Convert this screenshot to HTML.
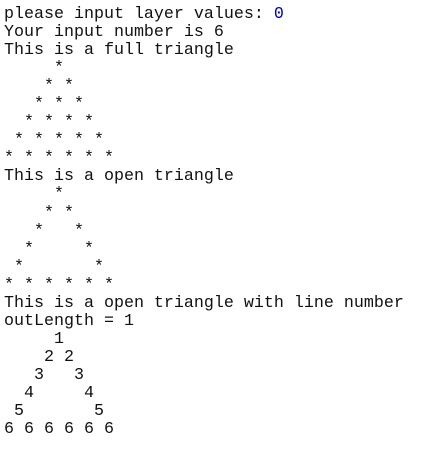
<!DOCTYPE html>
<html><head><meta charset="utf-8"><style>
html,body{margin:0;padding:0;background:#fff;width:445px;height:464px;overflow:hidden}
pre{margin:0;padding:6px 0 0 4px;font-family:"Liberation Mono","Courier New",monospace;font-size:16.67px;line-height:18.05px;color:#111}
.b{color:#0000c0}
</style></head><body><pre>please input layer values: <span class="b">0</span>
Your input number is 6
This is a full triangle
     *
    * *
   * * *
  * * * *
 * * * * *
* * * * * *
This is a open triangle
     *
    * *
   *   *
  *     *
 *       *
* * * * * *
This is a open triangle with line number
outLength = 1
     1
    2 2
   3   3
  4     4
 5       5
6 6 6 6 6 6</pre></body></html>
